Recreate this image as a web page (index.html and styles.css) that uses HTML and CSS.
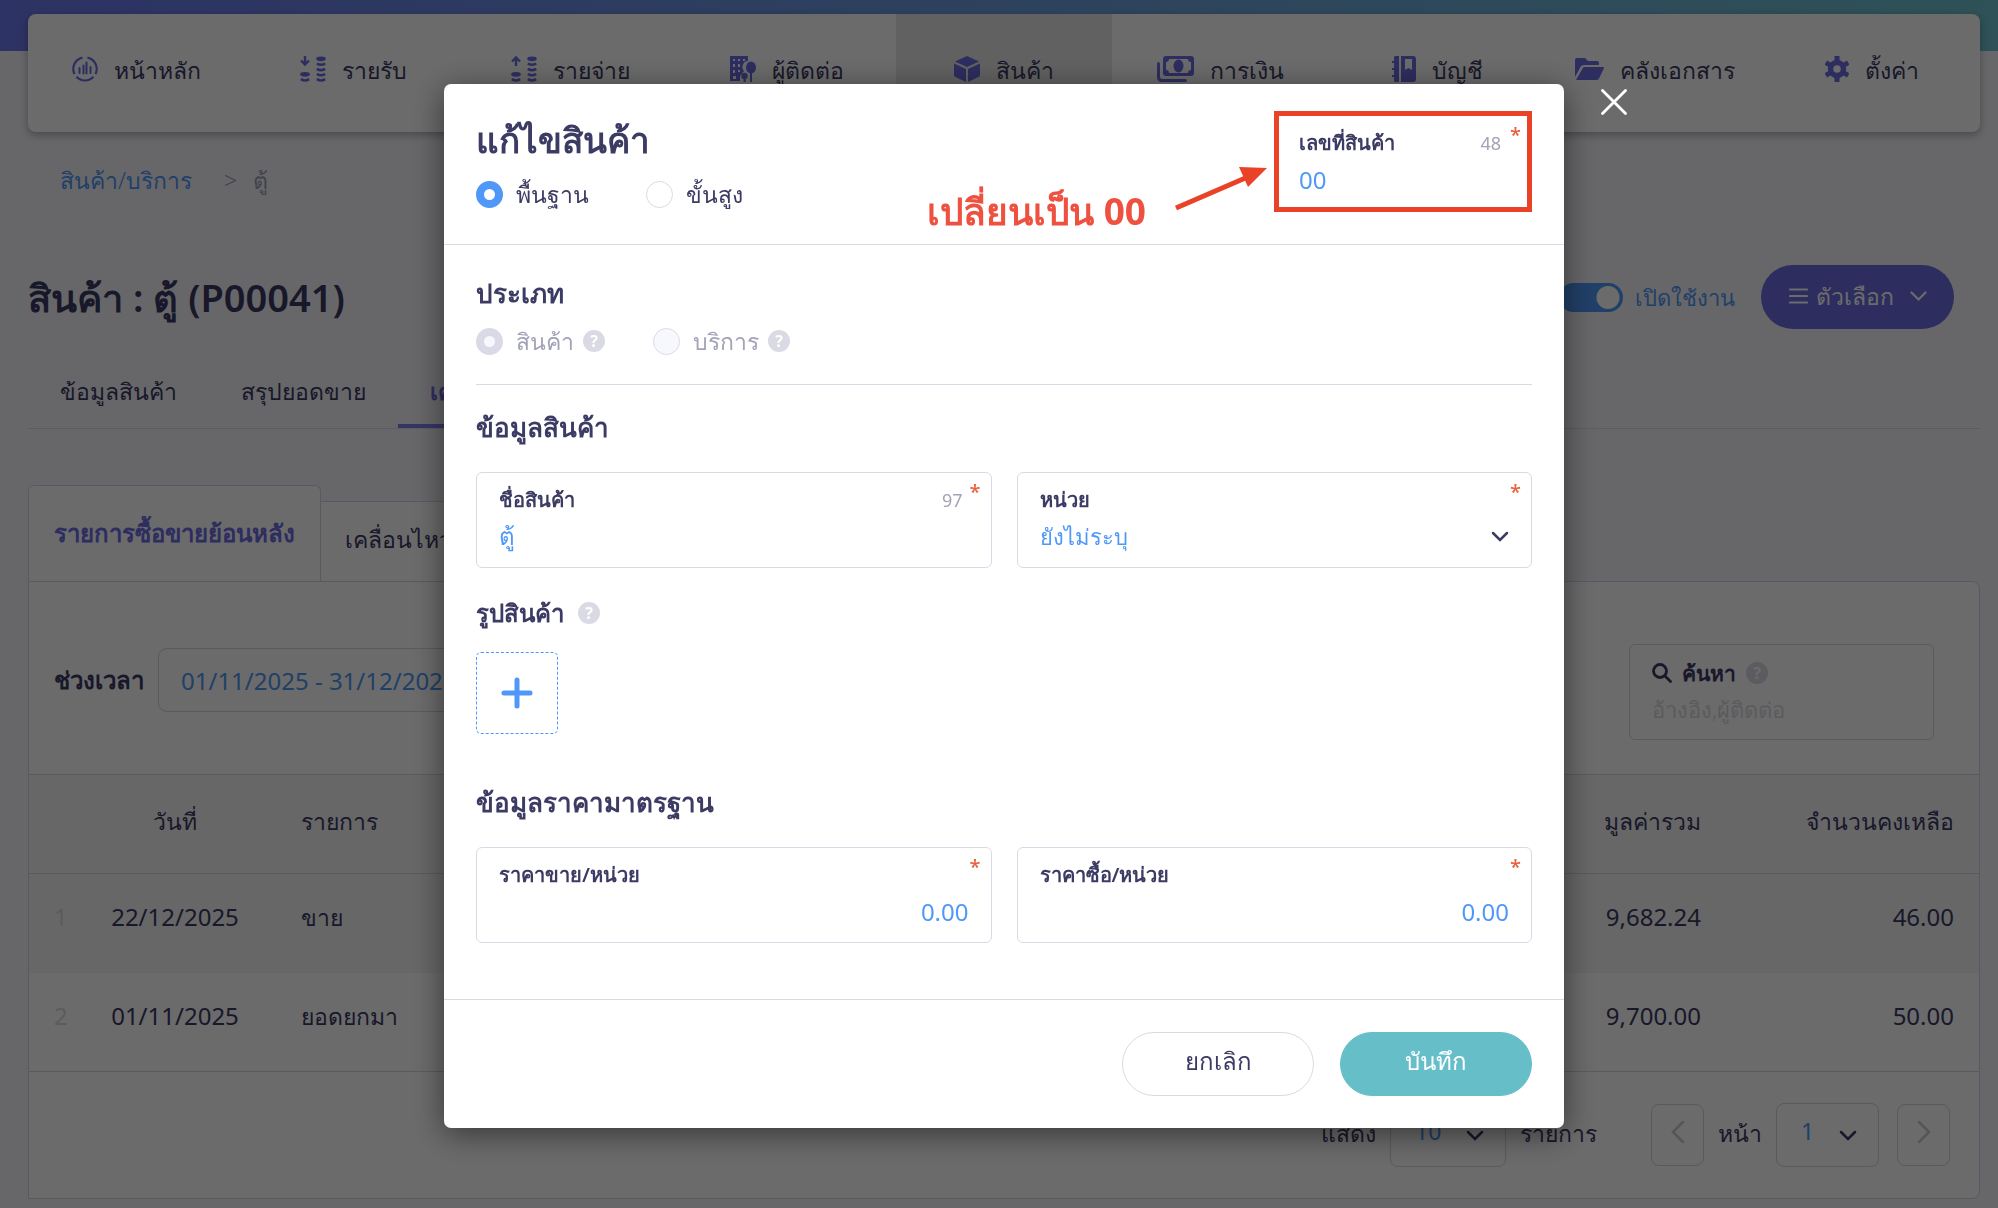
FILE: index.html
```html
<!DOCTYPE html>
<html lang="th">

<head>
  <title>แก้ไขสินค้า</title>
  <meta charset="UTF-8">
  <link rel="stylesheet" href="styles.css">
</head>

<body>
  <div class="page">
    <header class="top">
      <nav class="menu">
        <a href="#" class="menu-item">
          <svg class="icon" width="26" height="26" viewBox="0 0 26 26" fill="none" stroke="currentColor" stroke-width="2.2">
            <path d="M15.500 1.600A11.600 11.600 0 0 1 23.500 18M10.500 1.600A11.600 11.600 0 0 0 2.500 18M4.500 20.800a11.600 11.600 0 0 0 17 0" />
            <path d="M7.500 12v5M11.500 9.500v8M14.500 6.500v11M18.500 11v6" stroke-linecap="round" stroke-width="2" />
          </svg>
          <span>หน้าหลัก</span>
        </a>
        <a href="#" class="menu-item">
          <svg class="icon" width="26" height="26" viewBox="0 0 26 26" fill="currentColor">
            <path d="M5 0v8M1 4.500 5 8.500l4-4" fill="none" stroke="currentColor" stroke-width="2.400" />
            <ellipse cx="5" cy="18.300" rx="4.800" ry="2.400" />
            <ellipse cx="21" cy="2.800" rx="4.800" ry="2.400" />
            <path d="M.8 23.200q4.200 2.600 8.400 0M16.800 7.500q4.200 2.600 8.400 0M16.800 12.800q4.200 2.600 8.400 0M16.800 18q4.200 2.600 8.400 0M16.800 23.200q4.200 2.600 8.400 0" fill="none" stroke="currentColor" stroke-width="2.600" />
          </svg>
          <span>รายรับ</span>
        </a>
        <a href="#" class="menu-item">
          <svg class="icon" width="26" height="26" viewBox="0 0 26 26" fill="currentColor">
            <path d="M5 10V2M1 5.500l4-4 4 4" fill="none" stroke="currentColor" stroke-width="2.400" />
            <ellipse cx="5" cy="18.300" rx="4.800" ry="2.400" />
            <ellipse cx="21" cy="2.800" rx="4.800" ry="2.400" />
            <path d="M.8 23.200q4.200 2.600 8.400 0M16.800 7.500q4.200 2.600 8.400 0M16.800 12.800q4.200 2.600 8.400 0M16.800 18q4.200 2.600 8.400 0M16.800 23.200q4.200 2.600 8.400 0" fill="none" stroke="currentColor" stroke-width="2.600" />
          </svg>
          <span>รายจ่าย</span>
        </a>
        <a href="#" class="menu-item">
          <svg class="icon" width="26" height="26" viewBox="0 0 26 26" fill="currentColor" fill-rule="evenodd">
            <path d="M0 0h18v5a6 6 0 0 0-4 10l-4 5v5H0zM3 3v2h2V3zm5 0v2h2V3zm5 0v2h2V3zM3 8v3h2V8zm5 0v3h2V8zM3 14v3h2v-3zm5 0v2h2v-2zM3 20v3h3v-3z" />
            <ellipse cx="21" cy="11.500" rx="5" ry="6" /><path d="M20 15h2v11h-2z" />
            <circle cx="14.500" cy="20" r="3.200" /><path d="M13.600 21h2v5h-2z" />
          </svg>
          <span>ผู้ติดต่อ</span>
        </a>
        <a href="#" class="menu-item active">
          <svg class="icon" width="26" height="26" viewBox="0 0 26 26" fill="currentColor">
            <path d="M13 0 25 5.500 13 11 1 5.500zM0 7.500 12 13v13L1.500 21Q0 20.300 0 19zM26 7.500 14 13v13l10.500-5q1.500-.7 1.500-2z" />
          </svg>
          <span>สินค้า</span>
        </a>
        <a href="#" class="menu-item">
          <svg class="icon" width="37" height="26" viewBox="0 0 37 26" fill="currentColor" fill-rule="evenodd">
            <path d="M9 0h25a3 3 0 0 1 3 3v14a3 3 0 0 1-3 3H9a3 3 0 0 1-3-3V3a3 3 0 0 1 3-3zM12 3a3 3 0 0 1-3 3v8a3 3 0 0 1 3 3h19a3 3 0 0 1 3-3V6a3 3 0 0 1-3-3z" />
            <ellipse cx="21.500" cy="10" rx="5" ry="6.500" />
            <path d="M0 8q0-2 1.500-2T3 8v13q0 2 2 2h23q2 0 2 1.500T28 26H5q-5 0-5-5z" />
          </svg>
          <span>การเงิน</span>
        </a>
        <a href="#" class="menu-item">
          <svg class="icon" width="24" height="26" viewBox="0 0 24 26" fill="currentColor" fill-rule="evenodd">
            <path d="M3 0h4v26H3q-1 0-1-2v-3H0v-2h2v-5H0v-2h2V7H0V5h2V2q0-2 1-2zM9 0h12q3 0 3 3v20q0 3-3 3H9zM13 3v11l3.500-2 3.500 2V3z" />
          </svg>
          <span>บัญชี</span>
        </a>
        <a href="#" class="menu-item">
          <svg class="icon" width="29" height="22" viewBox="0 0 29 22" fill="currentColor">
            <path d="M0 2q0-2 2-2h8l3 3h9q2 0 2 2v2H9Q6.500 7 5.500 9L0 19zM8.500 9H28q1.500 0 .8 1.500L24 20.500q-.8 1.500-2.500 1.500H1z" />
          </svg>
          <span>คลังเอกสาร</span>
        </a>
        <a href="#" class="menu-item">
          <svg class="icon" width="24" height="26" viewBox="0 0 24 26" fill="none" stroke="currentColor">
            <circle cx="12" cy="13" r="6.500" stroke-width="5.500" />
            <path d="M12 0v5M12 21v5M.8 6.500l4 2.500M19.200 17l4 2.500M23.200 6.500l-4 2.500M4.800 17l-4 2.500" stroke-width="5" />
          </svg>
          <span>ตั้งค่า</span>
        </a>
      </nav>
    </header>

    <main class="content">
      <div class="crumb">
        <a href="#">สินค้า/บริการ</a>
        <span class="crumb-sep">&gt;</span>
        <span>ตู้</span>
      </div>

      <div class="title-row">
        <h1>สินค้า : ตู้ (P00041)</h1>
        <div class="title-tools">
          <label class="switch">
            <input type="checkbox" checked>
            <span>เปิดใช้งาน</span>
          </label>
          <button type="button" class="btn-option">
            <svg width="19" height="16" viewBox="0 0 19 16" stroke="currentColor" stroke-width="2.200" stroke-linecap="round"><path d="M1 1.500h17M1 8h17M1 14.500h17" /></svg>
            <span>ตัวเลือก</span>
            <svg class="caret" width="17" height="10" viewBox="0 0 17 10" fill="none" stroke="currentColor" stroke-width="2.200" stroke-linecap="round"><path d="m1.500 1.500 7 7 7-7" /></svg>
          </button>
        </div>
      </div>

      <nav class="tabs">
        <a href="#">ข้อมูลสินค้า</a>
        <a href="#">สรุปยอดขาย</a>
        <a href="#" class="active">เคลื่อนไหวสินค้า</a>
      </nav>

      <nav class="subtabs">
        <a href="#" class="active">รายการซื้อขายย้อนหลัง</a>
        <a href="#">เคลื่อนไหวสินค้า</a>
      </nav>

      <section class="panel">
        <div class="filter">
          <label for="period">ช่วงเวลา</label>
          <input id="period" class="period" type="text" value="01/11/2025 - 31/12/2025">
          <div class="search">
            <label for="search">
              <svg width="20" height="20" viewBox="0 0 20 20" fill="none" stroke="currentColor" stroke-width="2.800" stroke-linecap="round"><circle cx="8" cy="8" r="6.500" /><path d="m13 13 5.500 5.500" /></svg>
              ค้นหา
              <span class="help">?</span>
            </label>
            <input id="search" type="text" placeholder="อ้างอิง,ผู้ติดต่อ">
          </div>
        </div>

        <table class="list">
          <thead>
            <tr>
              <th class="col-no"></th>
              <th class="col-date">วันที่</th>
              <th class="col-name">รายการ</th>
              <th class="col-total">มูลค่ารวม</th>
              <th class="col-left">จำนวนคงเหลือ</th>
            </tr>
          </thead>
          <tbody>
            <tr>
              <td class="col-no">1</td>
              <td class="col-date">22/12/2025</td>
              <td class="col-name">ขาย</td>
              <td class="col-total">9,682.24</td>
              <td class="col-left">46.00</td>
            </tr>
            <tr>
              <td class="col-no">2</td>
              <td class="col-date">01/11/2025</td>
              <td class="col-name">ยอดยกมา</td>
              <td class="col-total">9,700.00</td>
              <td class="col-left">50.00</td>
            </tr>
          </tbody>
        </table>

        <div class="pager">
          <label for="size">แสดง</label>
          <select id="size" class="size"><option>10</option></select>
          <span class="unit">รายการ</span>
          <button type="button" aria-label="ก่อนหน้า">
            <svg width="14" height="24" viewBox="0 0 14 24" fill="none" stroke="currentColor" stroke-width="2.500" stroke-linecap="round"><path d="M12 2 2 12l10 10" /></svg>
          </button>
          <label for="pageno">หน้า</label>
          <select id="pageno"><option>1</option></select>
          <button type="button" class="next" aria-label="ถัดไป">
            <svg width="14" height="24" viewBox="0 0 14 24" fill="none" stroke="currentColor" stroke-width="2.500" stroke-linecap="round"><path d="m2 2 10 10L2 22" /></svg>
          </button>
        </div>
      </section>
    </main>
  </div>

  <div class="mask">
    <form class="modal">
      <button type="button" class="close" aria-label="ปิด">
        <svg width="26" height="26" viewBox="0 0 26 26" stroke="currentColor" stroke-width="2.800" stroke-linecap="round"><path d="m1.500 1.500 23 23M24.500 1.500l-23 23" /></svg>
      </button>

      <div class="modal-head">
        <div>
          <h2>แก้ไขสินค้า</h2>
          <div class="radios">
            <label><input type="radio" name="mode" checked>พื้นฐาน</label>
            <label><input type="radio" name="mode">ขั้นสูง</label>
          </div>
        </div>
        <div class="note">
          <span>เปลี่ยนเป็น 00</span>
          <svg width="96" height="48" viewBox="0 0 96 48"><path d="m2 43 74-32" stroke="#ea4226" stroke-width="5" /><path d="m93 3-28-1 9 20z" fill="#ea4226" /></svg>
        </div>
        <div class="field marked">
          <div class="field-top"><label for="code">เลขที่สินค้า</label><span class="count">48</span></div>
          <input id="code" type="text" value="00">
          <span class="star">*</span>
        </div>
      </div>

      <div class="modal-body">
        <h3>ประเภท</h3>
        <div class="radios kind">
          <label><input type="radio" name="kind" checked disabled>สินค้า<span class="help">?</span></label>
          <label><input type="radio" name="kind" disabled>บริการ<span class="help">?</span></label>
        </div>

        <h3>ข้อมูลสินค้า</h3>
        <div class="fields">
          <div class="field">
            <div class="field-top"><label for="name">ชื่อสินค้า</label><span class="count">97</span></div>
            <input id="name" type="text" value="ตู้">
            <span class="star">*</span>
          </div>
          <div class="field">
            <div class="field-top"><label for="unit">หน่วย</label></div>
            <select id="unit"><option>ยังไม่ระบุ</option></select>
            <span class="star">*</span>
          </div>
        </div>

        <h4>รูปสินค้า<span class="help">?</span></h4>
        <button type="button" class="add" aria-label="เพิ่มรูป">
          <svg width="32" height="32" viewBox="0 0 32 32" stroke="currentColor" stroke-width="5" stroke-linecap="round"><path d="M16 3v26M3 16h26" /></svg>
        </button>

        <h3>ข้อมูลราคามาตรฐาน</h3>
        <div class="fields">
          <div class="field">
            <div class="field-top"><label for="sell">ราคาขาย/หน่วย</label></div>
            <input id="sell" class="num" type="text" value="0.00">
            <span class="star">*</span>
          </div>
          <div class="field">
            <div class="field-top"><label for="buy">ราคาซื้อ/หน่วย</label></div>
            <input id="buy" class="num" type="text" value="0.00">
            <span class="star">*</span>
          </div>
        </div>
      </div>

      <div class="modal-foot">
        <button type="button" class="btn">ยกเลิก</button>
        <button type="submit" class="btn btn-save">บันทึก</button>
      </div>
    </form>
  </div>
</body>

</html>
```
FILE: styles.css
```css
* {
  box-sizing: border-box;
}

body {
  margin: 0;
  background: #f5f5fb;
  color: #3c3b64;
  font-family: "Noto Sans", "Open Sans", sans-serif;
  font-size: 23px;
  font-weight: 300;
  line-height: 32px;
  overflow: hidden;
}

a {
  color: inherit;
  text-decoration: none;
}

h1, h2, h3, h4 {
  margin: 0;
}

input, select, button {
  font: inherit;
  color: inherit;
}

/* 顶部菜单 */
.top {
  padding: 14px 18px 0 28px;
  background: linear-gradient(90deg, #6c78ee, #6fc3cf) no-repeat 0 0 / 100% 51px;
}

.menu {
  display: grid;
  grid-template-columns: repeat(9, 1fr);
  height: 118px;
  border-radius: 8px;
  background: #fff;
  box-shadow: 0 3px 8px rgba(0, 0, 0, .3);
}

.menu-item {
  display: flex;
  align-items: center;
  justify-content: center;
  gap: 16px;
  padding-bottom: 8px;
  white-space: nowrap;
}

.menu-item span {
  padding-top: 2px;
}

.menu-item.active {
  background: #e8e8e8;
}

.icon {
  color: #6c6ce4;
}

.content {
  padding: 0 18px 0 28px;
}

.crumb {
  display: flex;
  gap: 32px;
  padding: 32px;
  color: #9f9fb5;
}

.crumb a {
  color: #5098f7;
}

.crumb-sep + span {
  margin-left: -16px;
}

.title-row {
  display: flex;
  align-items: center;
  justify-content: space-between;
  height: 64px;
  margin-top: 37px;
}

.title-row h1 {
  font-size: 38px;
  font-weight: 600;
}

.title-tools {
  display: flex;
  align-items: center;
  gap: 26px;
  padding-right: 26px;
}

.switch {
  display: flex;
  align-items: center;
  gap: 12px;
  color: #5098f7;
  font-size: 22px;
}

.switch input {
  appearance: none;
  width: 64px;
  height: 29px;
  margin: 0;
  border-radius: 16px;
  background: radial-gradient(circle at 49px 50%, #fff 11px, transparent 12px) #5098f7;
}

.btn-option {
  display: flex;
  align-items: center;
  justify-content: center;
  gap: 8px;
  width: 193px;
  height: 64px;
  padding-bottom: 4px;
  border: 0;
  border-radius: 32px;
  background: #6c6ce4;
  color: #fff;
}

.caret {
  margin-left: 8px;
}

.tabs {
  display: flex;
  height: 100px;
  border-bottom: 1px solid #dadae6;
}

.tabs a {
  padding: 46px 32px 0;
}

.tabs .active {
  border-bottom: 4px solid #7f7ff0;
  color: #6c6ce4;
  font-weight: 600;
}

.subtabs {
  display: flex;
  align-items: flex-end;
  margin-top: 56px;
}

.subtabs a {
  height: 80px;
  padding: 21px 24px;
  border: 1px solid #d5d5e3;
  border-width: 1px 1px 0 0;
  background: #fff;
}

.subtabs .active {
  height: 96px;
  padding: 31px 25px;
  border-left-width: 1px;
  border-radius: 6px 6px 0 0;
  color: #6c6ce4;
  font-size: 24px;
  font-weight: 600;
}

.panel {
  border: 1px solid #d5d5e3;
  border-radius: 0 8px 8px 0;
  background: #fff;
}

.filter {
  display: flex;
  align-items: center;
  gap: 14px;
  height: 192px;
  padding: 4px 45px 0 25px;
}

.filter > label {
  font-size: 24px;
  font-weight: 600;
}

.period {
  width: 320px;
  height: 64px;
  padding: 0 22px;
  border: 1px solid #d5d5e3;
  border-radius: 9px;
  background: none;
  color: #5098f7;
  font-size: 24px;
  font-weight: 400;
}

.search {
  width: 305px;
  height: 96px;
  margin: 24px 0 0 auto;
  padding: 12px 22px;
  border: 1px solid #d5d5e3;
  border-radius: 6px;
}

.search label {
  display: flex;
  align-items: center;
  gap: 10px;
  font-size: 21px;
  font-weight: 600;
}

.search input {
  width: 100%;
  height: 40px;
  padding: 0;
  border: 0;
  background: none;
  font-size: 22px;
}

.search input::placeholder {
  color: #d9d9e0;
}

.help {
  display: inline-block;
  width: 22px;
  height: 22px;
  border-radius: 50%;
  background: #dadae5;
  color: #fff;
  font-size: 16px;
  font-weight: 700;
  line-height: 22px;
  text-align: center;
}

.list {
  width: 100%;
  border-collapse: collapse;
  border-bottom: 1px solid #d5d5e3;
}

.list th, .list td {
  height: 99px;
  padding: 0 25px 12px;
  text-align: left;
}

.list th {
  padding-bottom: 6px;
  font-weight: 300;
}

.list thead {
  border-top: 1px solid #d5d5e3;
  border-bottom: 1px solid #d5d5e3;
}

.list thead, .list tbody tr:nth-child(odd) {
  background: #f5f5f7;
}

.list .col-no {
  width: 60px;
  padding-right: 0;
  color: #dadae0;
}

.list .col-date {
  width: 172px;
  padding-left: 0;
  padding-right: 0;
  text-align: center;
}

.list .col-name {
  padding-left: 40px;
}

.list .col-total, .list .col-left {
  width: 253px;
  text-align: right;
}

.list td.col-no, .list td.col-date, .list td.col-total, .list td.col-left {
  font-size: 24px;
  font-weight: 400;
}

.pager {
  display: flex;
  align-items: center;
  justify-content: flex-end;
  gap: 14px;
  height: 126px;
  padding-right: 29px;
}

.pager label, .pager .unit {
  padding-bottom: 4px;
}

.pager select {
  appearance: none;
  width: 103px;
  height: 64px;
  padding: 0 24px 8px;
  border: 1px solid #d5d5e3;
  border-radius: 8px;
  background: none;
  color: #5098f7;
  font-weight: 400;
}

.pager .size {
  width: 116px;
}

.pager select, .field select {
  background-image: url("data:image/svg+xml,%3Csvg xmlns='http://www.w3.org/2000/svg' width='18' height='11' fill='none' stroke='%233c3b64' stroke-width='2.500' stroke-linecap='round'%3E%3Cpath d='m2 2 7 7 7-7'/%3E%3C/svg%3E");
  background-repeat: no-repeat;
  background-position: right 21px center;
}

.pager .unit {
  margin-right: 40px;
}

.pager button {
  width: 53px;
  height: 62px;
  padding: 0;
  border: 1px solid #d5d5e3;
  border-radius: 8px;
  background: none;
  color: #c9c9d4;
}

.pager .next {
  margin-left: 4px;
}

/* 弹窗 */
.mask {
  position: fixed;
  inset: 0;
  padding: 84px 0 0 10px;
  background: rgba(0, 0, 0, .58);
}

.modal {
  position: relative;
  max-width: 1120px;
  margin: 0 auto;
  border-radius: 7px;
  background: #fff;
  box-shadow: 0 6px 32px rgba(0, 0, 0, .5);
}

.close {
  position: absolute;
  top: 5px;
  right: -63px;
  padding: 0;
  border: 0;
  background: none;
  color: #fff;
}

.modal-head {
  display: flex;
  justify-content: space-between;
  height: 161px;
  padding: 27px 32px 0;
  border-bottom: 1px solid #dadae6;
}

.modal-head h2 {
  padding: 5px 0 14px;
  font-size: 35px;
  font-weight: 600;
  line-height: 48px;
}

.radios {
  display: flex;
  gap: 57px;
}

.radios label {
  display: flex;
  align-items: center;
}

.radios input {
  appearance: none;
  width: 27px;
  height: 27px;
  margin: 0 13px 0 0;
  border: 1px solid #dadae6;
  border-radius: 50%;
}

.radios input:checked {
  border: 8px solid #5098f7;
}

.note {
  display: flex;
  gap: 28px;
  margin: 54px 4px 0 auto;
  color: #ee5140;
  font-size: 37px;
  font-weight: 700;
  line-height: 60px;
}

.note span {
  padding-top: 16px;
}

.field {
  position: relative;
  height: 96px;
  padding: 11px 22px;
  border: 1px solid #dadae6;
  border-radius: 6px;
}

.field-top {
  display: flex;
  justify-content: space-between;
  padding-right: 6px;
  font-size: 20px;
  font-weight: 600;
}

.count {
  color: #a3a3b8;
  font-size: 18px;
  font-weight: 400;
}

.field input, .field select {
  display: block;
  width: 100%;
  height: 40px;
  padding: 0;
  border: 0;
  background-color: transparent;
  color: #5098f7;
  font-size: 24px;
  font-weight: 400;
}

.field select {
  appearance: none;
  background-position: right 0 center;
  font-size: 22px;
  font-weight: 300;
}

.field .num {
  text-align: right;
}

.star {
  position: absolute;
  top: 3px;
  right: 10px;
  color: #e8603c;
  font-size: 20px;
  font-weight: 500;
}

.marked {
  width: 258px;
  height: 101px;
  border: 5px solid #ea4226;
  border-radius: 0;
  padding: 11px 20px;
}

.marked .star {
  right: 6px;
}

.modal-body {
  padding: 32px 32px 56px;
}

.modal-body h3 {
  font-size: 26px;
  font-weight: 600;
}

.kind {
  gap: 48px;
  margin: 16px 0 26px;
  padding-bottom: 27px;
  border-bottom: 1px solid #dadae6;
  color: #a3a3b8;
}

.kind .help {
  margin-left: 9px;
}

.kind input {
  background: #f7f8fd;
}

.kind input:checked {
  border-color: #dadae6;
}

.fields {
  display: grid;
  grid-template-columns: 1fr 1fr;
  gap: 25px;
  margin-top: 29px;
}

.modal-body h4 {
  display: flex;
  align-items: center;
  gap: 14px;
  margin: 29px 0 23px;
  font-size: 24px;
  font-weight: 600;
}

.add {
  display: flex;
  align-items: center;
  justify-content: center;
  width: 82px;
  height: 82px;
  margin-bottom: 52px;
  border: 1px dashed #5098f7;
  border-radius: 5px;
  background: none;
  color: #5098f7;
}

.modal-foot {
  display: flex;
  justify-content: flex-end;
  gap: 26px;
  padding: 32px;
  border-top: 1px solid #dadae6;
}

.btn {
  width: 192px;
  height: 64px;
  padding: 0 0 6px;
  border: 1px solid #dadae6;
  border-radius: 32px;
  background: #fff;
  font-size: 24px;
}

.btn-save {
  border-color: #66bec9;
  background: #66bec9;
  color: #fff;
}
```
